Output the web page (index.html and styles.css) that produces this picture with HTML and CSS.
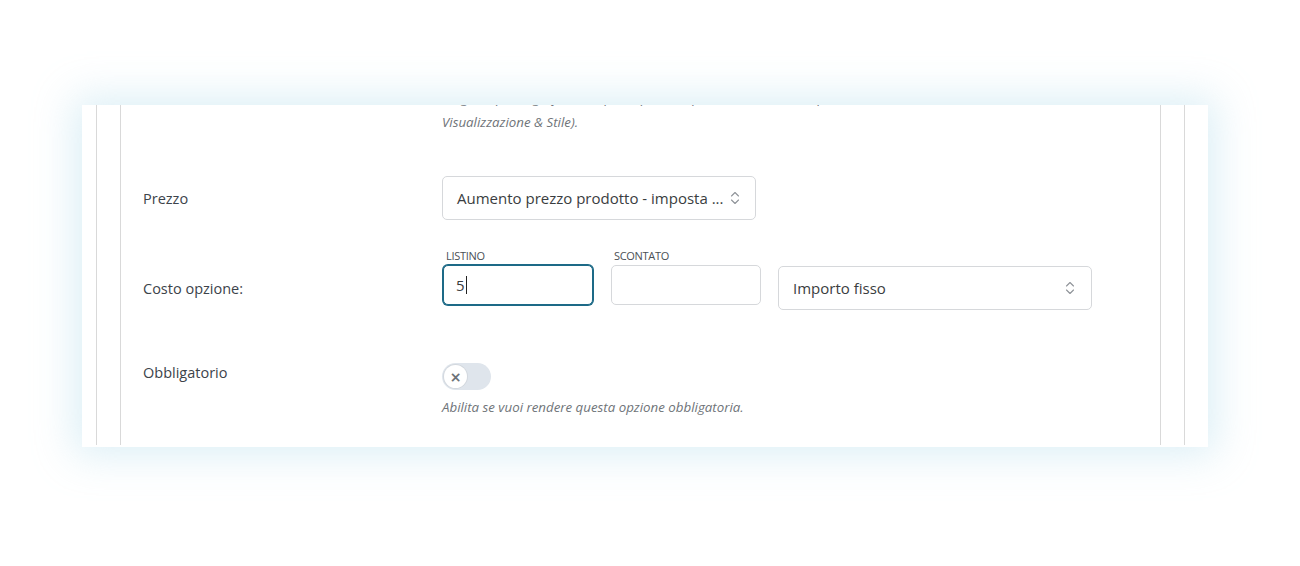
FILE: index.html
```html
<!DOCTYPE html>
<html lang="it">
<head>
<meta charset="utf-8">
<title>Opzione prodotto</title>
<link rel="stylesheet" href="styles.css">
</head>
<body>
<div class="card">
  <div class="frame-outer">
    <div class="frame-inner">
      <div class="content">
        <p class="desc desc-top">Scegli il tipo (la grafica si imposta poi in Impostazioni, scheda Aspetto, sezione<br>Visualizzazione &amp; Stile).</p>

        <div class="row row-prezzo">
          <div class="row-label">Prezzo</div>
          <div class="select select-price">
            <span class="select-text">Aumento prezzo prodotto - imposta ...</span>
            <svg class="chev" width="10" height="14" viewBox="0 0 10 14"><path d="M1.5 5 L5 1.5 L8.5 5 M1.5 9 L5 12.5 L8.5 9" fill="none" stroke="#8f9399" stroke-width="1.1" stroke-linecap="round" stroke-linejoin="round"/></svg>
          </div>
        </div>

        <div class="row row-costo">
          <div class="row-label label-costo">Costo opzione:</div>
          <div class="fields">
            <div class="field">
              <div class="mini-label">Listino</div>
              <div class="input input-focus"><span class="val">5</span><span class="caret"></span></div>
            </div>
            <div class="field">
              <div class="mini-label">Scontato</div>
              <div class="input"></div>
            </div>
            <div class="select select-type">
              <span class="select-text">Importo fisso</span>
              <svg class="chev" width="10" height="14" viewBox="0 0 10 14"><path d="M1.5 5 L5 1.5 L8.5 5 M1.5 9 L5 12.5 L8.5 9" fill="none" stroke="#8f9399" stroke-width="1.1" stroke-linecap="round" stroke-linejoin="round"/></svg>
            </div>
          </div>
        </div>

        <div class="row row-obbl">
          <div class="row-label">Obbligatorio</div>
          <div class="toggle-col">
            <div class="toggle"><span class="knob">×</span></div>
            <p class="desc desc-help">Abilita se vuoi rendere questa opzione obbligatoria.</p>
          </div>
        </div>
      </div>
    </div>
  </div>
</div>
</body>
</html>
```

FILE: styles.css
```css
* { box-sizing: border-box; }
html, body { margin: 0; padding: 0; background: #ffffff; }
body {
  font-family: "Open Sans", "Noto Sans", "Liberation Sans", sans-serif;
  color: #3c434a;
  padding-top: 105px;
  padding-left: 82px;
  height: 566px;
  overflow: hidden;
}
.card {
  width: 1126px;
  height: 342px;
  background: #ffffff;
  overflow: hidden;
  box-shadow: 0 0 38px 8px rgba(172, 218, 234, 0.42);
}
.frame-outer {
  height: 340px;
  margin: 0 23px 0 14px;
  border-left: 1px solid #d9d9d9;
  border-right: 1px solid #d9d9d9;
}
.frame-inner {
  display: flow-root;
  height: 100%;
  margin: 0 23px;
  border-left: 1px solid #d9d9d9;
  border-right: 1px solid #d9d9d9;
}
.content {
  margin-top: -19px;
  padding-left: 22px;
}
.desc {
  margin: 0;
  font-style: italic;
  font-size: 13.3px;
  line-height: 18px;
  color: #6f7479;
}
.desc-top { margin-left: 299px; line-height: 24px; }
.row { display: flex; }
.row-label {
  width: 299px;
  flex: none;
  font-size: 14.5px;
  line-height: 20px;
  color: #3c434a;
}
.row-prezzo { margin-top: 42px; align-items: center; }
.row-prezzo .row-label { padding-top: 2px; }
.select {
  display: flex;
  align-items: center;
  justify-content: space-between;
  height: 44px;
  border: 1px solid #d6d8db;
  border-radius: 5px;
  padding: 0 15px 0 14px;
  font-size: 15px;
  color: #3a3d40;
  background: #fff;
}
.select-price { width: 314px; height: 44px; }
.select-type { width: 314px; margin-top: 16px; padding-left: 14px; padding-right: 16px; }
.chev { flex: none; }
.row-costo { margin-top: 30px; }
.label-costo { padding-top: 29px; }
.fields { display: flex; padding-left: 1px; }
.field { width: 150px; flex: none; }
.field + .field { margin-left: 18px; }
.fields .select-type { margin-left: 17px; }
.mini-label {
  font-size: 11px;
  line-height: 12px;
  text-transform: uppercase;
  color: #4a4f55;
  padding-left: 3px;
  margin-bottom: 3px;
  letter-spacing: -0.3px;
}
.input {
  height: 40px;
  border: 1px solid #d6d8db;
  border-radius: 5px;
  background: #fff;
  display: flex;
  align-items: center;
  padding-left: 12px;
  font-size: 15px;
  color: #3a3d40;
}
.input-focus {
  border-color: #1d6a87;
  box-shadow: 0 0 0 1px #1d6a87;
}
.caret {
  display: inline-block;
  width: 1px;
  height: 18px;
  background: #222;
  margin-left: 1px;
}
.row-obbl { margin-top: 53px; }
.toggle {
  width: 49px;
  height: 27px;
  border-radius: 14px;
  background: #dfe5ec;
  padding: 2px;
  display: flex;
  align-items: center;
}
.knob {
  width: 23px;
  height: 23px;
  border-radius: 50%;
  background: #fff;
  box-shadow: 0 0 0 1px #d3d8de;
  display: flex;
  align-items: center;
  justify-content: center;
  font-size: 14px;
  font-weight: 700;
  color: #6d7278;
  line-height: 1;
  font-family: "DejaVu Sans", sans-serif;
}
.desc-help { margin-top: 8px; }
```
